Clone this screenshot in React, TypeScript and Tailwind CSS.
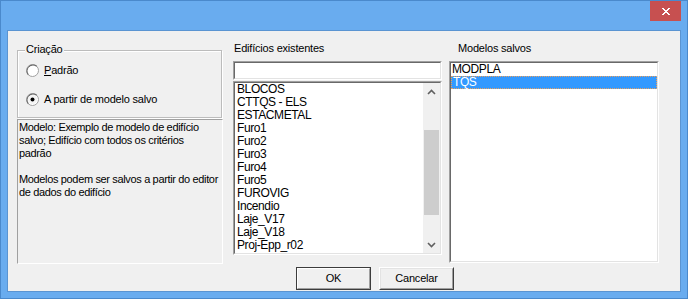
import React from 'react';

const ui = "font-['Liberation_Sans',Arial,sans-serif] text-[11px] leading-[13px] tracking-[-0.2px] text-black";
const descFont = "font-['Liberation_Sans',Arial,sans-serif] text-[11px] leading-[13px] tracking-[-0.35px] text-black";
const listFont = "font-['Liberation_Sans',Arial,sans-serif] text-[12px] leading-[13px] tracking-[-0.4px] text-black";

const edificios = [
  'BLOCOS',
  'CTTQS - ELS',
  'ESTACMETAL',
  'Furo1',
  'Furo2',
  'Furo3',
  'Furo4',
  'Furo5',
  'FUROVIG',
  'Incendio',
  'Laje_V17',
  'Laje_V18',
  'Proj-Epp_r02',
];

const descricao = [
  'Modelo: Exemplo de modelo de edifício',
  'salvo; Edifício com todos os critérios',
  'padrão',
  '',
  'Modelos podem ser salvos a partir do editor',
  'de dados do edifício',
];

function Radio({ checked }: { checked?: boolean }) {
  return (
    <svg width="13" height="13" viewBox="0 0 13 13" className="shrink-0">
      <circle cx="6.5" cy="6.5" r="6" fill="#ffffff" stroke="#a0a0a0" />
      <path d="M2.3 10.7 A6 6 0 0 1 10.7 2.3" fill="none" stroke="#696969" strokeWidth="1.2" />
      <circle cx="6.5" cy="6.5" r="4.6" fill={checked ? '#f4f4f4' : '#ffffff'} />
      {checked && <circle cx="6.5" cy="6.5" r="2" fill="#000000" />}
    </svg>
  );
}

function Sunken({ className, children }: { className?: string; children?: React.ReactNode }) {
  return (
    <div className={`border border-t-[#a0a0a0] border-l-[#a0a0a0] border-b-white border-r-white ${className ?? ''}`}>
      <div className="h-full border border-t-[#696969] border-l-[#696969] border-b-[#e3e3e3] border-r-[#e3e3e3] bg-white">
        {children}
      </div>
    </div>
  );
}

function Button({ label, isDefault }: { label: string; isDefault?: boolean }) {
  return (
    <button
      className={`w-[75px] h-[23px] ${isDefault ? 'border border-[#3c3c3c]' : 'border border-t-white border-l-white border-b-[#404040] border-r-[#404040]'} bg-[#f0f0f0] p-0`}
    >
      <div
        className={`h-full flex items-center justify-center border ${isDefault ? 'border-t-white border-l-white border-b-[#a0a0a0] border-r-[#a0a0a0]' : 'border-t-[#e3e3e3] border-l-[#e3e3e3] border-b-[#a0a0a0] border-r-[#a0a0a0]'} ${ui}`}
      >
        {label}
      </div>
    </button>
  );
}

export default function App() {
  return (
    <div className="w-[688px] h-[299px] bg-[#69acef] border border-[#4a89cc] flex flex-col overflow-hidden">
      {/* title bar */}
      <div className="h-[29px] shrink-0 flex justify-end pr-[6px]">
        <div className="w-[31px] h-[20px] bg-[#c75050] flex items-center justify-center">
          <svg width="10" height="9" viewBox="0 0 10 9" shapeRendering="crispEdges">
            <path d="M1 1h2v1h1v1h2V2h1V1h2v1H8v1H7v1H6v1h1v1h1v1h1v1H7V7H6V6H4v1H3v1H1V7h1V6h1V5h1V4H3V3H2V2H1z" fill="#ffffff" />
          </svg>
        </div>
      </div>

      {/* client area */}
      <div className="flex-1 mx-[6px] mb-[6px] border border-[#5a94d2] bg-[#f0f0f0] flex flex-col">
        <div className="flex items-start pt-[11px] pl-[9px]">
          {/* left column */}
          <div className="w-[206px] flex flex-col">
            <div className="relative mt-[8px] w-[205px] h-[68px] border border-[#bcbcbc] shadow-[inset_1px_1px_0_#ffffff,1px_1px_0_#ffffff] pt-[13px] pl-[8px]">
              <span className={`absolute top-[-8px] left-[7px] bg-[#f0f0f0] px-[1px] ${ui}`}>Criação</span>
              <div className="flex items-center h-[13px] gap-[5px]">
                <Radio />
                <span className={ui}>
                  <span className="underline">P</span>adrão
                </span>
              </div>
              <div className="flex items-center h-[13px] gap-[5px] mt-[16px]">
                <Radio checked />
                <span className={ui}>A partir de modelo salvo</span>
              </div>
            </div>
            <div className="mt-[1px] h-[145px] border border-t-[#a0a0a0] border-l-[#a0a0a0] border-b-white border-r-white pt-[1px] pl-[1px] overflow-hidden">
              {descricao.map((line, i) => (
                <div key={i} className={`h-[13px] whitespace-nowrap ${descFont}`}>
                  {line}
                </div>
              ))}
            </div>
          </div>

          {/* middle column */}
          <div className="ml-[10px] w-[209px] flex flex-col">
            <div className={`h-[19px] pl-[1px] ${ui}`}>Edifícios existentes</div>
            <Sunken className="h-[19px]" />
            <Sunken className="mt-[1px] h-[174px]">
              <div className="flex h-full">
                <div className={`flex-1 pl-[2px] ${listFont}`}>
                  {edificios.map((e) => (
                    <div key={e} className="h-[13px] whitespace-nowrap">
                      {e}
                    </div>
                  ))}
                </div>
                <div className="w-[17px] bg-[#f0f0f0] flex flex-col">
                  <div className="h-[17px] flex items-center justify-center">
                    <svg width="9" height="6" viewBox="0 0 9 6">
                      <path d="M1 5 L4.5 1.5 L8 5" fill="none" stroke="#606060" strokeWidth="1.6" />
                    </svg>
                  </div>
                  <div className="flex-1 flex flex-col px-[1px]">
                    <div className="h-[30px]" />
                    <div className="h-[85px] bg-[#cdcdcd]" />
                  </div>
                  <div className="h-[17px] flex items-center justify-center">
                    <svg width="9" height="6" viewBox="0 0 9 6">
                      <path d="M1 1 L4.5 4.5 L8 1" fill="none" stroke="#606060" strokeWidth="1.6" />
                    </svg>
                  </div>
                </div>
              </div>
            </Sunken>
          </div>

          {/* right column */}
          <div className="ml-[7px] w-[210px] flex flex-col">
            <div className={`h-[19px] pl-[9px] ${ui}`}>Modelos salvos</div>
            <Sunken className="h-[202px]">
              <div className={listFont}>
                <div className="h-[13px] pl-[1px]">MODPLA</div>
                <div className="h-[13px] pl-[1px] bg-[#3399ff] text-white border border-dotted border-[#e8a060] leading-[11px]">
                  TQS
                </div>
              </div>
            </Sunken>
          </div>
        </div>

        {/* buttons */}
        <div className="mt-[3px] pl-[288px] flex gap-[8px]">
          <Button label="OK" isDefault />
          <Button label="Cancelar" />
        </div>
      </div>
    </div>
  );
}
